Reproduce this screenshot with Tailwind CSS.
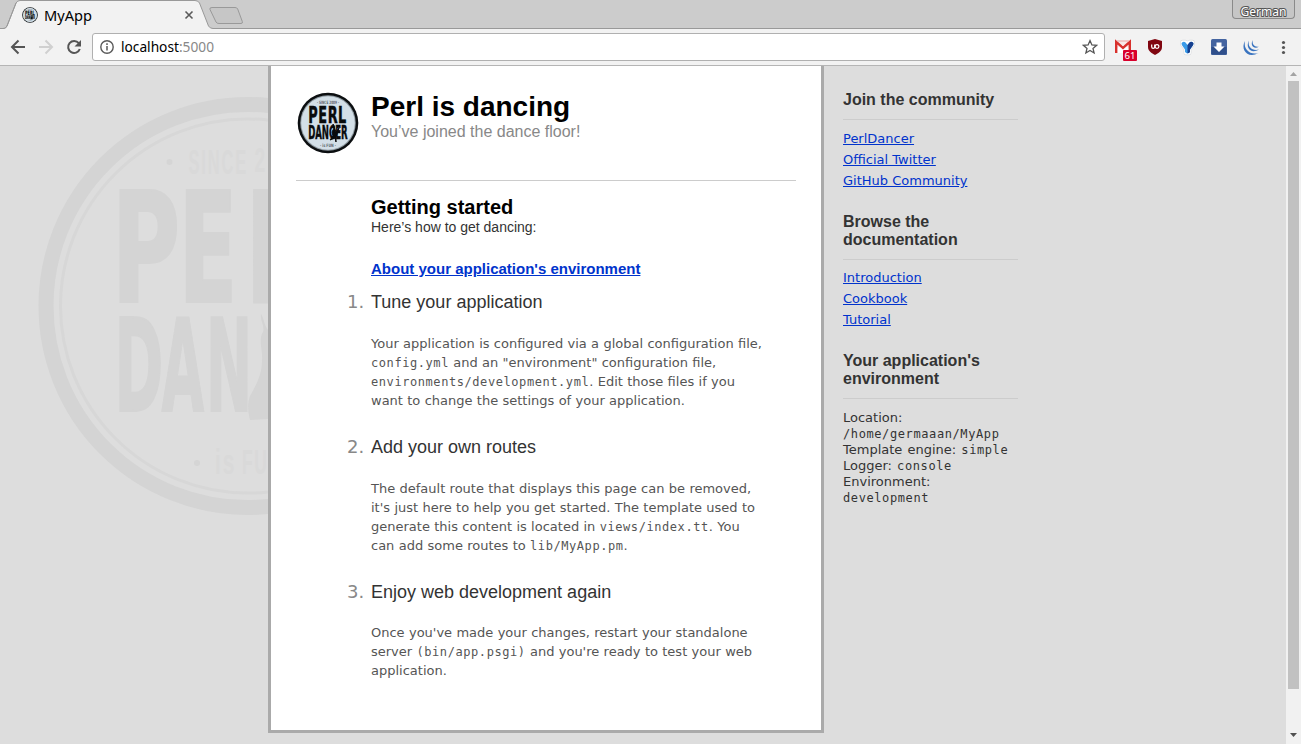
<!DOCTYPE html>
<html lang="en">
<head>
<meta charset="utf-8">
<title>MyApp</title>
<script src="https://cdn.jsdelivr.net/npm/@tailwindcss/browser@4"></script>
</head>
<body class="w-[1301px] h-[744px] overflow-hidden flex flex-col bg-[#ddd] text-[#333] font-['DejaVu_Sans',sans-serif] text-[13px]">
<svg class="hidden" aria-hidden="true">
  <symbol id="badge" viewBox="0 0 62 62">
    <circle cx="31" cy="31" r="30.3" fill="#0b0e10"/>
    <circle cx="31" cy="31" r="27.8" fill="#8d989f"/>
    <circle cx="31" cy="31" r="26.8" fill="#d3dfe7"/>
    <g font-family="'DejaVu Sans',sans-serif" font-weight="bold" fill="#090b0c" stroke="#090b0c" stroke-width=".5">
      <text font-size="23" transform="translate(11.300 30.500) scale(.56 1)" letter-spacing="1">PERL</text>
      <text font-size="19.500" transform="translate(11.300 47) scale(.44 1)" letter-spacing="-.200">DANCER</text>
    </g>
    <path d="M36 32l1 4-2 4 1 4-3 4 5-2 1 4 0-5 3-9-3 4z" fill="#090b0c" stroke="#090b0c" stroke-width="1"/>
    <g font-family="'DejaVu Sans',sans-serif" fill="#5a646b" font-weight="bold">
      <text x="20" y="11.500" font-size="4.500" textLength="22" lengthAdjust="spacingAndGlyphs">· SINCE 2009 ·</text>
      <text x="23" y="55" font-size="4.500" textLength="16" lengthAdjust="spacingAndGlyphs">· is FUN ·</text>
    </g>
  </symbol>
</svg>

<!-- Tab strip -->
<header class="relative h-[29px] shrink-0 bg-[#ccc] border-b border-[#999]">
  <svg class="absolute left-0 top-0" width="250" height="29" viewBox="0 0 250 29">
    <path d="M0 29V28.500H3Q6 28.500 7 26L16 3Q17.500.5 20 .5H195Q198 .5 199.500 3L208.500 26Q210 28.500 213 28.500V29z" fill="#f2f2f2"/>
    <path d="M0 28.500H3Q6 28.500 7 26L16 3Q17.500.5 20 .5H195Q198 .5 199.500 3L208.500 26Q210 28.500 213 28.500" fill="none" stroke="#999"/>
    <path d="M0 0H15L5 28H0z" fill="#ccc"/>
    <path d="M0 28.500H3Q6 28.500 7 26L16 3" fill="none" stroke="#999"/>
    <path d="M212 7.500H235Q237 7.500 237.700 9L242.300 21.500Q243 23.500 241 23.500H219Q216.700 23.500 216 22L210 9.500Q209.200 7.500 212 7.500z" fill="#c6c6c6" stroke="#999"/>
    <path d="M185.500 11.500l7 7m0-7l-7 7" stroke="#5a5a5a" stroke-width="1.600"/>
  </svg>
  <div class="relative flex items-center h-[29px] pl-[22px]">
    <svg class="size-4" viewBox="0 0 62 62"><use href="#badge"/></svg>
    <svg class="ml-1.5 block font-['Noto_Sans',sans-serif]" width="52" height="20"><text x="0" y="15.500" textLength="48" lengthAdjust="spacingAndGlyphs" font-size="14.500">MyApp</text></svg>
    <div class="ml-auto mr-[6px] self-start w-[63px] h-[19px] border border-t-0 border-[#8a8a8a] rounded-b-[4px] bg-[#c6c6c6] font-['Noto_Sans',sans-serif]">
      <svg class="block" width="61" height="18"><text x="7.500" y="15.500" font-size="12.500" textLength="46" lengthAdjust="spacingAndGlyphs" fill="#fff" stroke="#555" stroke-width="2.200" stroke-linejoin="round" paint-order="stroke">German</text></svg>
    </div>
  </div>
</header>

<!-- Toolbar -->
<nav class="h-[37px] shrink-0 bg-[#f2f2f2] border-b border-[#b5b5b5] flex items-center">
  <svg class="shrink-0" width="92" height="36" viewBox="0 0 92 36" fill="none" stroke="#555" stroke-width="2">
    <path d="M25 18H12.500M18.500 11.500L12 18L18.500 24.500"/>
    <path d="M39 18H51.500M45.500 11.500L52 18L45.500 24.500" stroke="#d0d0d0"/>
    <path d="M78.800 14.200A6 6 0 1 0 79.800 20"/>
    <path d="M81 11v6.500h-6.500z" fill="#555" stroke="none"/>
  </svg>
  <div class="w-[1013px] h-[28px] shrink-0 bg-white border border-[#b0b0b0] rounded-[3px] flex items-center">
    <svg class="ml-[7px]" width="14" height="14" viewBox="0 0 14 14"><circle cx="7" cy="7" r="6.200" fill="none" stroke="#5a5a5a" stroke-width="1.400"/><path d="M7 6v4.500M7 3.300v1.600" stroke="#5a5a5a" stroke-width="1.500"/></svg>
    <svg class="ml-[7px] font-['Noto_Sans',sans-serif]" width="110" height="22"><text x="0" y="16" font-size="14.200" textLength="93" lengthAdjust="spacingAndGlyphs" fill="#000">localhost<tspan fill="#888">:5000</tspan></text></svg>
    <svg class="ml-auto mr-[6px]" width="16" height="16" viewBox="0 0 16 16"><path d="M8 1.600l1.900 4.300 4.700.4-3.600 3.100 1.100 4.600L8 11.500 3.900 14 5 9.400 1.400 6.300l4.700-.4z" fill="none" stroke="#555" stroke-width="1.300"/></svg>
  </div>
  <svg class="shrink-0" width="196" height="36" viewBox="1105 29 196 36">
    <rect x="1115" y="40.500" width="16" height="12.500" rx="1" fill="#f8e9e8"/>
    <path d="M1117 48l6-3 6 3v5h-12z" fill="#fff"/>
    <path d="M1116.200 53V41.800L1123 47.800L1129.800 41.800V53" fill="none" stroke="#d8302c" stroke-width="2.400"/>
    <path d="M1117 41h12" stroke="#e9a5a2"/>
    <rect x="1123" y="50" width="14" height="11" rx="1" fill="#d8002c"/>
    <text x="1124.500" y="59.300" font-family="'Noto Sans',sans-serif" font-size="9.500" fill="#fff" textLength="11" lengthAdjust="spacingAndGlyphs">61</text>
    <path d="M1155 39l7 2v6c0 4-3.500 6-7 8c-3.500-2-7-4-7-8v-6z" fill="#800610"/>
    <path d="M1151.700 44.500v2.300q0 1.600 1.500 1.600t1.500-1.600v-2.300" fill="none" stroke="#fff" stroke-width="1.200"/><circle cx="1157" cy="46.500" r="1.900" fill="none" stroke="#fff" stroke-width="1.200"/>
    <path d="M1182.500 42h3l2 2 2-2h3v2.500l-3.300 4.500v4h-3.400v-4l-3.300-4.500z" fill="#fff" stroke="#d8dadd" stroke-width="4.400" stroke-linejoin="round"/>
    <path d="M1182.500 42h3l2 2 2-2h3v2.500l-3.300 4.500v4h-3.400v-4l-3.300-4.500z" fill="#fff" stroke="#fff" stroke-width="3.200" stroke-linejoin="round"/>
    <path d="M1182 42.500q2-1.500 3.500 0l2 2.500 2-2.500q1.500-1.500 3.500 0q1 1 0 2.700L1190 49.500V52q-2.500 2.800-5 0V49.500L1182 45.200q-1-1.700 0-2.700z" fill="#3a9be8"/>
    <path d="M1187.500 45l2-2.500q1.500-1.500 3.500 0q1 1 0 2.700L1190 49.500V52q-1 1.200-2.500 1.200z" fill="#173f8e"/>
    <rect x="1211" y="39" width="16" height="16" rx="1.500" fill="#4464a0"/><path d="M1211.500 47h15v7.500h-15z" fill="#2f4f8b"/>
    <path d="M1216.500 42.500h5v4h3l-5.500 5.500-5.500-5.500h3z" fill="#fff"/>
    <g fill="#3a74c0"><path d="M1245 41C1240 50 1248 59 1258.500 53C1251 55.500 1243 50 1245 41z"/><path d="M1249 40.500C1245 47.500 1251 54.500 1259 49.500C1253 51.500 1247 47 1249 40.500z"/><path d="M1253 40C1249.500 45 1254 50 1259 46.500C1255 47.500 1251.500 44.500 1253 40z"/></g>
    <g fill="#555"><circle cx="1283.500" cy="42.500" r="1.600"/><circle cx="1283.500" cy="47.500" r="1.600"/><circle cx="1283.500" cy="52.500" r="1.600"/></g>
  </svg>
</nav>

<!-- Page viewport -->
<div class="relative flex-1 min-h-0 flex">
  <svg class="absolute left-0 top-0" width="268" height="678" viewBox="0 66 268 678" aria-hidden="true">
    <circle cx="247.500" cy="306" r="201.500" fill="none" stroke="#d4d4d4" stroke-width="15"/>
    <circle cx="247.500" cy="306" r="187" fill="none" stroke="#d7d7d7" stroke-width="3"/>
    <g font-family="'DejaVu Sans',sans-serif" font-weight="bold" fill="#d4d4d4" stroke="#d4d4d4" stroke-width="2">
      <text font-size="154" transform="translate(111.500 302) scale(.61 1)">P</text>
      <text font-size="154" transform="translate(178.500 302) scale(.56 1)">E</text>
      <text font-size="154" transform="translate(245 302) scale(.62 1)">R</text>
      <text font-size="128" transform="translate(114.500 411) scale(.46 1)">D</text>
      <text font-size="128" transform="translate(161.500 411) scale(.43 1)">A</text>
      <text font-size="128" transform="translate(206 411) scale(.43 1)">N</text>
    </g>
    <path d="M261 314c-1 7 4 12 2 18c-5 8 0 18-1 28c0 15-6 25-12 36c-3 8-2 16 0 24l18-1V330c-4-5-4-12-7-16z" fill="#d4d4d4"/>
    <g font-family="'Liberation Sans',sans-serif" font-weight="bold" fill="#d9d9d9">
      <text font-size="35" transform="translate(188.500 174) scale(.47 1)" letter-spacing="4">SINCE</text>
      <text font-size="35" transform="translate(254.500 172) scale(.55 1)">2</text>
      <text font-size="35" transform="translate(215 474) scale(.6 1)" letter-spacing="3">is</text>
      <text font-size="35" transform="translate(242 474) scale(.5 1)" letter-spacing="3">FU</text>
    </g>
    <circle cx="169.500" cy="162" r="3" fill="#d5d5d5"/><circle cx="197" cy="463" r="3" fill="#d5d5d5"/>
  </svg>

  <main class="relative ml-[268px] w-[556px] h-[667px] shrink-0 bg-white border-3 border-t-0 border-[#aaa] px-[25px] pt-[25px]">
    <div class="flex h-[90px] border-b border-[#ccc] font-['Liberation_Sans',sans-serif]">
      <svg class="ml-px mt-px size-[62px]" viewBox="0 0 62 62"><use href="#badge"/></svg>
      <div class="ml-[12px]">
        <h1 class="text-[28px] leading-[32px] font-bold text-black">Perl is dancing</h1>
        <h3 class="text-[16px] leading-[18px] text-[#888]">You’ve joined the dance floor!</h3>
      </div>
    </div>
    <div class="pl-[75px] font-['Liberation_Sans',sans-serif]">
      <h1 class="mt-[15px] text-[20px] leading-[22px] font-bold text-black">Getting started</h1>
      <h3 class="text-[14px] leading-[18px]">Here’s how to get dancing:</h3>
      <h2 class="mt-[24px] text-[15px] leading-[18px] font-bold"><a href="#" class="underline text-[#03c]">About your application's environment</a></h2>
    </div>
    <ol class="pl-[75px] text-[#555] leading-[19px] [&_code]:font-['DejaVu_Sans_Mono',monospace] [&_code]:leading-none [&_code]:text-[12px] [&_code]:tracking-[0.57px] [&_p]:[word-spacing:0.2px]">
      <li>
        <h2 class="flex mt-[13px] text-[18px] leading-[22px] text-[#333] font-['Liberation_Sans',sans-serif]"><span class="-ml-[24px] w-[24px] text-[#888] font-['DejaVu_Sans',sans-serif]">1.</span>Tune your application</h2>
        <p class="mt-[21px] whitespace-nowrap">Your application is configured via a global configuration file,<br><code>config.yml</code> and an "environment" configuration file,<br><code>environments/development.yml</code>. Edit those files if you<br>want to change the settings of your application.</p>
      </li>
      <li>
        <h2 class="flex mt-[26px] text-[18px] leading-[22px] text-[#333] font-['Liberation_Sans',sans-serif]"><span class="-ml-[24px] w-[24px] text-[#888] font-['DejaVu_Sans',sans-serif]">2.</span>Add your own routes</h2>
        <p class="mt-[21px] whitespace-nowrap">The default route that displays this page can be removed,<br>it's just here to help you get started. The template used to<br>generate this content is located in <code>views/index.tt</code>. You<br>can add some routes to <code>lib/MyApp.pm</code>.</p>
      </li>
      <li>
        <h2 class="flex mt-[26px] text-[18px] leading-[22px] text-[#333] font-['Liberation_Sans',sans-serif]"><span class="-ml-[24px] w-[24px] text-[#888] font-['DejaVu_Sans',sans-serif]">3.</span>Enjoy web development again</h2>
        <p class="mt-[20px] whitespace-nowrap">Once you've made your changes, restart your standalone<br>server <code>(bin/app.psgi)</code> and you're ready to test your web<br>application.</p>
      </li>
    </ol>
  </main>

  <aside class="ml-[19px] w-[175px] shrink-0 pt-[25px] [&_a]:text-[#03c] [&_a]:underline [&_code]:font-['DejaVu_Sans_Mono',monospace] [&_code]:leading-none [&_code]:text-[12px] [&_code]:tracking-[0.6px] [&_h3]:font-['Liberation_Sans',sans-serif] [&_h3]:font-bold [&_h3]:text-[16px] [&_h3]:leading-[18px] [&_h3]:border-b [&_h3]:border-[#ccc] [&_h3]:pb-[10px]">
    <h3>Join the community</h3>
    <ul class="mt-[8px] leading-[21px]">
      <li><a href="#">PerlDancer</a></li>
      <li><a href="#">Official Twitter</a></li>
      <li><a href="#">GitHub Community</a></li>
    </ul>
    <h3 class="mt-[22px]">Browse the<br>documentation</h3>
    <ul class="mt-[7px] leading-[21px]">
      <li><a href="#">Introduction</a></li>
      <li><a href="#">Cookbook</a></li>
      <li><a href="#">Tutorial</a></li>
    </ul>
    <h3 class="mt-[22px]">Your application's<br>environment</h3>
    <div class="mt-[11px] leading-[16px] whitespace-nowrap [word-spacing:1px]">Location:<br><code>/home/germaaan/MyApp</code><br>Template engine: <code>simple</code><br>Logger: <code>console</code><br>Environment:<br><code>development</code></div>
  </aside>

  <div class="ml-auto w-[15px] h-full bg-[#f1f1f1] flex flex-col items-center">
    <svg width="15" height="15"><path d="M4 10h7L7.500 6z" fill="#a3a3a3"/></svg>
    <div class="w-[11px] h-[608px] bg-[#c1c1c1]"></div>
    <svg class="mt-auto" width="15" height="15"><path d="M4 4h7L7.500 8z" fill="#505050"/></svg>
  </div>
</div>
</body>
</html>
